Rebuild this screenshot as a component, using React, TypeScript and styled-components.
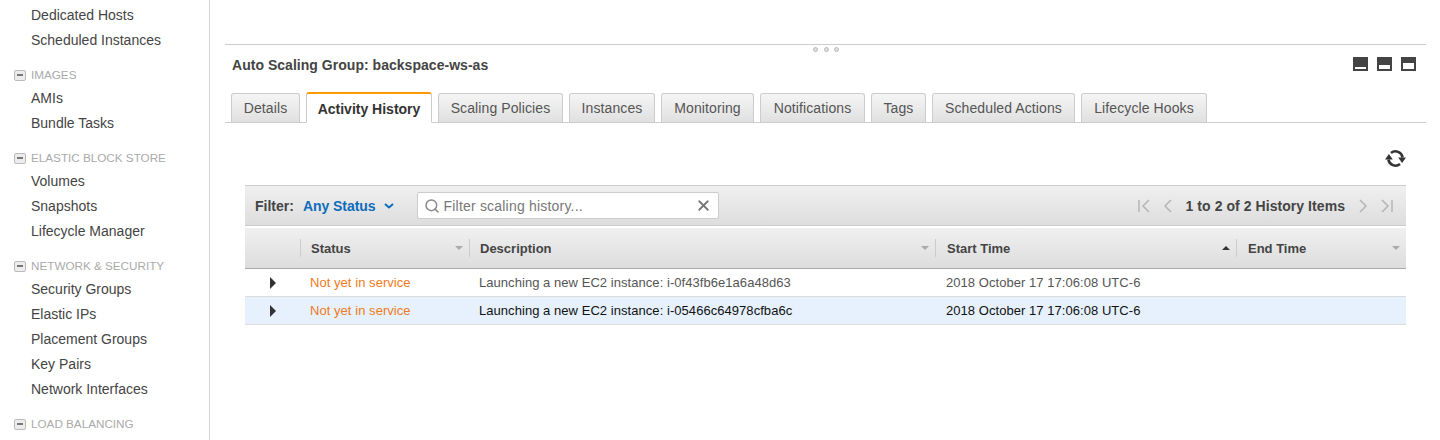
import styled, { createGlobalStyle } from 'styled-components';
import { Search, X } from 'lucide-react';

const GlobalStyle = createGlobalStyle`
  html, body {
    margin: 0;
    height: 440px;
    overflow: hidden;
    background: #fff;
    font-family: "Liberation Sans", Arial, sans-serif;
    font-size: 14px;
    color: #444;
  }
`;

const Page = styled('div')({
  display: 'flex',
  width: 1440,
  height: 440,
  overflow: 'hidden',
});

const Sidebar = styled('nav')({
  width: 209,
  flexShrink: 0,
  borderRight: '1px solid #d5d5d5',
  paddingTop: 3,
});

const NavGroup = styled('div')({
  marginBottom: 9,
});

const NavHeader = styled('div')({
  display: 'flex',
  alignItems: 'center',
  height: 24,
  paddingLeft: 14,
  gap: 5,
  fontSize: 11.7,
  color: '#aaa',
});

const Collapse = styled('span')({
  boxSizing: 'border-box',
  width: 12,
  height: 11,
  marginTop: 2,
  border: '1px solid #bbb',
  borderRadius: 2,
  background: '#ececec',
  display: 'flex',
  alignItems: 'center',
  justifyContent: 'center',
  '&::before': {
    content: '""',
    width: 6,
    height: 2,
    background: '#777',
  },
});

const NavItem = styled('div')({
  height: 25,
  lineHeight: '25px',
  paddingLeft: 31,
  color: '#444',
});

const Main = styled('main')({
  flex: 1,
  paddingTop: 44,
  paddingLeft: 15,
  paddingRight: 14,
});

const Panel = styled('section')({
  position: 'relative',
  borderTop: '1px solid #ccc',
});

const DragHandle = styled('div')({
  position: 'absolute',
  top: 2,
  left: 588,
  display: 'flex',
  gap: 5.5,
  '> i': {
    boxSizing: 'border-box',
    width: 5,
    height: 5,
    borderRadius: '50%',
    border: '1px solid #bbb',
    background: '#ddd',
  },
});

const TitleRow = styled('div')({
  display: 'flex',
  alignItems: 'flex-start',
  justifyContent: 'space-between',
  height: 47,
  paddingLeft: 7,
  paddingRight: 10,
});

const Title = styled('h2')({
  margin: 0,
  marginTop: 12,
  fontSize: 14,
  lineHeight: '17px',
  fontWeight: 700,
  color: '#444',
  letterSpacing: 0.03,
});

const DockButtons = styled('div')({
  display: 'flex',
  gap: 9,
  marginTop: 12,
});

const DockIcon = styled('svg')({
  display: 'block',
});

const Tabs = styled('div')({
  display: 'flex',
  alignItems: 'flex-end',
  gap: 6,
  height: 30,
  paddingLeft: 6,
  borderBottom: '1px solid #ccc',
});

const Tab = styled('div')<{ $active?: boolean; $width: number }>(({ $active, $width }) => ({
  boxSizing: 'border-box',
  width: $width,
  height: $active ? 31 : 29,
  marginBottom: $active ? -1 : 0,
  textAlign: 'center',
  lineHeight: $active ? '30px' : '28px',
  border: '1px solid #ccc',
  borderBottom: $active ? '1px solid #fff' : 'none',
  borderTop: $active ? '2px solid #f90' : '1px solid #ccc',
  borderRadius: '3px 3px 0 0',
  background: $active ? '#fff' : 'linear-gradient(#f5f5f5, #e0e0e0)',
  fontWeight: $active ? 700 : 400,
  color: $active ? '#333' : '#555',
  letterSpacing: $active ? 0 : 0.1,
  whiteSpace: 'nowrap',
}));

const Toolbar = styled('div')({
  display: 'flex',
  justifyContent: 'flex-end',
  alignItems: 'center',
  height: 62,
  paddingRight: 20,
  paddingTop: 8,
  boxSizing: 'border-box',
  color: '#333',
});

const TableWrap = styled('div')({
  margin: '0 20px',
});

const FilterBar = styled('div')({
  display: 'flex',
  alignItems: 'center',
  boxSizing: 'border-box',
  height: 41,
  paddingLeft: 10,
  paddingRight: 12,
  borderTop: '1px solid #ccc',
  borderBottom: '1px solid #ccc',
  background: 'linear-gradient(#f0f0f0, #ddd)',
});

const FilterLabel = styled('span')({
  fontWeight: 700,
  color: '#444',
});

const FilterValue = styled('span')({
  display: 'flex',
  alignItems: 'center',
  gap: 8,
  marginLeft: 9,
  marginRight: 23,
  fontWeight: 700,
  color: '#0f6cbd',
  letterSpacing: -0.05,
});

const SearchBox = styled('div')({
  display: 'flex',
  alignItems: 'center',
  boxSizing: 'border-box',
  width: 302,
  height: 27,
  padding: '0 6px',
  gap: 4,
  background: '#fff',
  border: '1px solid #ccc',
  borderRadius: 2,
  color: '#777',
});

const SearchText = styled('span')({
  flex: 1,
  color: '#777',
  letterSpacing: 0.2,
});

const Pager = styled('div')({
  display: 'flex',
  alignItems: 'center',
  marginLeft: 'auto',
  gap: 10,
  fontWeight: 700,
  color: '#444',
});

const PagerText = styled('span')({
  margin: '0 1px',
  letterSpacing: 0.06,
});

const columns = '55px 169px 466px 301px 170px';

const HeaderRow = styled('div')({
  display: 'grid',
  gridTemplateColumns: columns,
  boxSizing: 'border-box',
  height: 41,
  marginTop: 2,
  alignItems: 'center',
  borderBottom: '1px solid #aaa',
  background: 'linear-gradient(#f0f0f0, #ddd)',
});

const HeaderCell = styled('div')<{ $inset?: number }>(({ $inset = 10 }) => ({
  display: 'flex',
  alignItems: 'center',
  justifyContent: 'space-between',
  boxSizing: 'border-box',
  height: 18,
  padding: `0 6px 0 ${$inset}px`,
  borderLeft: '1px solid #ccc',
  fontWeight: 700,
  fontSize: 13,
  color: '#444',
}));

const EmptyHeader = styled('div')({});

const Caret = styled('span')<{ $up?: boolean; $dark?: boolean }>(({ $up, $dark }) => ({
  width: 0,
  height: 0,
  borderLeft: '4px solid transparent',
  borderRight: '4px solid transparent',
  ...($up
    ? { borderBottom: `4px solid ${$dark ? '#333' : '#aaa'}` }
    : { borderTop: `4px solid ${$dark ? '#333' : '#aaa'}` }),
}));

const Row = styled('div')<{ $selected?: boolean }>(({ $selected }) => ({
  display: 'grid',
  gridTemplateColumns: columns,
  boxSizing: 'border-box',
  height: 28,
  alignItems: 'center',
  borderBottom: '1px solid #ddd',
  fontSize: 13,
  letterSpacing: 0.05,
  background: $selected ? '#e6f1fd' : '#fff',
  color: $selected ? '#111' : '#555',
}));

const ExpandCell = styled('div')({
  display: 'flex',
  paddingLeft: 25,
  '&::before': {
    content: '""',
    borderLeft: '6px solid #333',
    borderTop: '6px solid transparent',
    borderBottom: '6px solid transparent',
  },
});

const Cell = styled('div')<{ $inset?: number }>(({ $inset = 10 }) => ({
  paddingLeft: $inset,
  whiteSpace: 'nowrap',
}));

const StatusCell = styled(Cell)({
  color: '#f07a1a',
});

const Dock = ({ top, bottom }: { top: number; bottom: number }) => (
  <DockIcon width="15" height="14" viewBox="0 0 15 14">
    <rect width="15" height="14" fill="#444" />
    <rect x="2" y={top} width="11" height={bottom} fill="#fff" />
  </DockIcon>
);

const PagerIcon = ({ d }: { d: string }) => (
  <svg width="14" height="16" viewBox="0 0 14 16" fill="none" stroke="#b5b5b5" strokeWidth="1.5">
    <path d={d} />
  </svg>
);

const RefreshIcon = () => (
  <svg width="21" height="19" viewBox="0 0 21 19" fill="none">
    <path d="M6 3.9A7.2 7.2 0 0 1 17.6 8.5" stroke="#333" strokeWidth="2.6" />
    <path d="M15 15.1A7.2 7.2 0 0 1 3.4 10.5" stroke="#333" strokeWidth="2.6" />
    <path d="M13.2 8.5H21L17.1 14Z" fill="#333" />
    <path d="M0 10.5H7.8L3.9 5Z" fill="#333" />
  </svg>
);

const nav = [
  { items: ['Dedicated Hosts', 'Scheduled Instances'] },
  { title: 'IMAGES', items: ['AMIs', 'Bundle Tasks'] },
  { title: 'ELASTIC BLOCK STORE', items: ['Volumes', 'Snapshots', 'Lifecycle Manager'] },
  {
    title: 'NETWORK & SECURITY',
    items: ['Security Groups', 'Elastic IPs', 'Placement Groups', 'Key Pairs', 'Network Interfaces'],
  },
  { title: 'LOAD BALANCING', items: [] },
];

const tabs = [
  { label: 'Details', width: 69 },
  { label: 'Activity History', width: 126 },
  { label: 'Scaling Policies', width: 125 },
  { label: 'Instances', width: 86 },
  { label: 'Monitoring', width: 93 },
  { label: 'Notifications', width: 105 },
  { label: 'Tags', width: 55 },
  { label: 'Scheduled Actions', width: 143 },
  { label: 'Lifecycle Hooks', width: 126 },
];

const rows = [
  { id: 'i-0f43fb6e1a6a48d63' },
  { id: 'i-05466c64978cfba6c', selected: true },
];

export default function App() {
  return (
    <Page>
      <GlobalStyle />
      <Sidebar>
        {nav.map((group, i) => (
          <NavGroup key={i}>
            {group.title && (
              <NavHeader>
                <Collapse />
                {group.title}
              </NavHeader>
            )}
            {group.items.map((item) => (
              <NavItem key={item}>{item}</NavItem>
            ))}
          </NavGroup>
        ))}
      </Sidebar>
      <Main>
        <Panel>
          <DragHandle>
            <i />
            <i />
            <i />
          </DragHandle>
          <TitleRow>
            <Title>Auto Scaling Group: backspace-ws-as</Title>
            <DockButtons>
              <Dock top={10} bottom={2} />
              <Dock top={8} bottom={4} />
              <Dock top={6} bottom={6} />
            </DockButtons>
          </TitleRow>
          <Tabs>
            {tabs.map((tab) => (
              <Tab key={tab.label} $width={tab.width} $active={tab.label === 'Activity History'}>
                {tab.label}
              </Tab>
            ))}
          </Tabs>
          <Toolbar>
            <RefreshIcon />
          </Toolbar>
          <TableWrap>
            <FilterBar>
              <FilterLabel>Filter:</FilterLabel>
              <FilterValue>
                Any Status
                <svg width="10" height="6" viewBox="0 0 10 6" fill="none" stroke="#0f6cbd" strokeWidth="2">
                  <path d="M1 1l4 3.5L9 1" />
                </svg>
              </FilterValue>
              <SearchBox>
                <Search size={16} strokeWidth={2.2} color="#888" />
                <SearchText>Filter scaling history...</SearchText>
                <X size={17} strokeWidth={2.6} color="#777" />
              </SearchBox>
              <Pager>
                <PagerIcon d="M2 2v12M12 2L6 8l6 6" />
                <PagerIcon d="M10 2L4 8l6 6" />
                <PagerText>1 to 2 of 2 History Items</PagerText>
                <PagerIcon d="M4 2l6 6-6 6" />
                <PagerIcon d="M12 2v12M2 2l6 6-6 6" />
              </Pager>
            </FilterBar>
            <HeaderRow>
              <EmptyHeader />
              <HeaderCell>
                Status
                <Caret />
              </HeaderCell>
              <HeaderCell>
                Description
                <Caret />
              </HeaderCell>
              <HeaderCell $inset={11}>
                Start Time
                <Caret $up $dark />
              </HeaderCell>
              <HeaderCell $inset={11}>
                End Time
                <Caret />
              </HeaderCell>
            </HeaderRow>
            {rows.map((row) => (
              <Row key={row.id} $selected={row.selected}>
                <ExpandCell />
                <StatusCell>Not yet in service</StatusCell>
                <Cell>Launching a new EC2 instance: {row.id}</Cell>
                <Cell $inset={11}>2018 October 17 17:06:08 UTC-6</Cell>
                <Cell />
              </Row>
            ))}
          </TableWrap>
        </Panel>
      </Main>
    </Page>
  );
}
